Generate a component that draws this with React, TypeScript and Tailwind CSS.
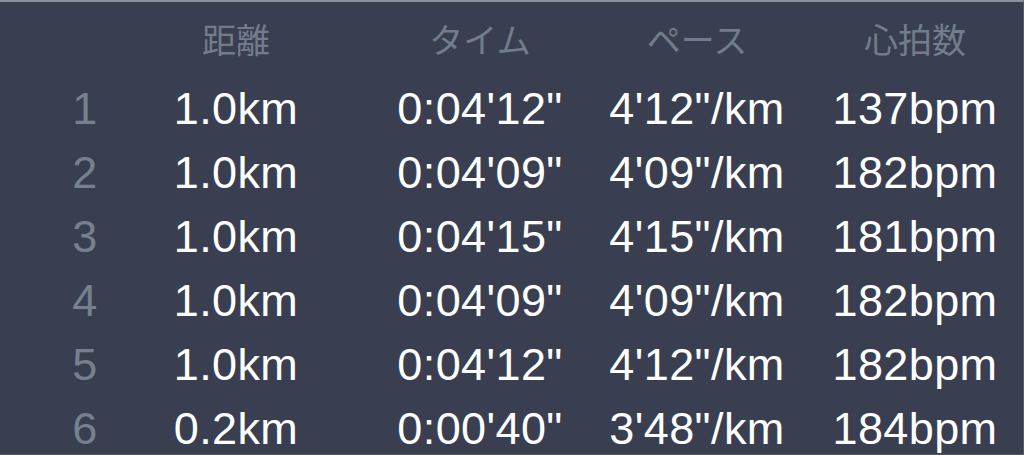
const header = ["", "距離", "タイム", "ペース", "心拍数"];

const laps = [
  ["1", "1.0km", "0:04'12\"", "4'12\"/km", "137bpm"],
  ["2", "1.0km", "0:04'09\"", "4'09\"/km", "182bpm"],
  ["3", "1.0km", "0:04'15\"", "4'15\"/km", "181bpm"],
  ["4", "1.0km", "0:04'09\"", "4'09\"/km", "182bpm"],
  ["5", "1.0km", "0:04'12\"", "4'12\"/km", "182bpm"],
  ["6", "0.2km", "0:00'40\"", "3'48\"/km", "184bpm"],
];

const cols = "grid grid-cols-[30px_272px_216px_218px_218px] pl-[70px]";

export default function App() {
  return (
    <div className="h-[455px] w-[1024px] overflow-hidden border-t-2 border-r border-b border-t-[#8c919b] border-r-[#555a67] border-b-[#555a67] bg-[#393f50] font-['Liberation_Sans',Arial,sans-serif]">
      <div className={`${cols} h-[74px] items-center`}>
        {header.map((h, i) => (
          <div
            key={i}
            className="text-center text-[34px] leading-none text-[#737c8b] font-['Noto_Sans_CJK_JP',sans-serif]"
          >
            {h}
          </div>
        ))}
      </div>
      {laps.map((row) => (
        <div key={row[0]} className={`${cols} h-16 items-center`}>
          {row.map((cell, i) => (
            <div
              key={i}
              className={`flex justify-center whitespace-nowrap text-[45px] leading-none tracking-[0.4px] ${
                i === 0 ? "text-[#76808f]" : "text-white"
              }`}
            >
              {cell}
            </div>
          ))}
        </div>
      ))}
    </div>
  );
}
